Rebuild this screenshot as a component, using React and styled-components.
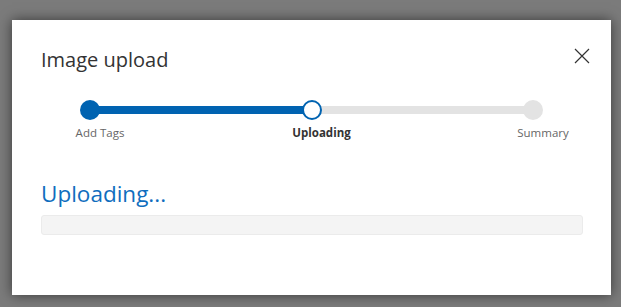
import React from "react";
import styled, { createGlobalStyle } from "styled-components";

const GlobalStyle = createGlobalStyle`
	html, body {
		margin: 0;
		padding: 0;
		background: #7b7b7b;
		font-family: "Open Sans", "Noto Sans", sans-serif;
	}
	#root {
		height: 307px;
	}
`;

const Overlay = styled.div`
	height: 307px;
	padding: 20px 0 0 12px;
	box-sizing: border-box;
`;

const Dialog = styled.div`
	width: 599px;
	height: 275px;
	background: #fff;
	box-sizing: border-box;
	padding: 24px 29px 0 29px;
	box-shadow: 0 0 12px rgba(0, 0, 0, 0.55);
	display: flex;
	flex-direction: column;
`;

const Header = styled.div`
	display: flex;
	justify-content: space-between;
	align-items: flex-start;
`;

const Title = styled.h1`
	margin: 0;
	font-size: 20px;
	font-weight: 400;
	color: #333;
	line-height: 32px;
`;

const CloseButton = styled.button`
	border: 0;
	background: none;
	padding: 0;
	margin: 4px -8px 0 0;
	width: 16px;
	height: 16px;
	cursor: pointer;
	display: flex;
`;

const Stepper = styled.div`
	position: relative;
	display: flex;
	justify-content: space-between;
	margin: 24px 19px 0 19px;
`;

const Track = styled.div`
	position: absolute;
	left: 30px;
	right: 30px;
	top: 6px;
	height: 8px;
	background: #e3e3e3;
`;

const TrackFill = styled.div`
	height: 100%;
	background: #0063b1;
`;

const Step = styled.div`
	position: relative;
	width: 60px;
	display: flex;
	flex-direction: column;
	align-items: center;
`;

const Dot = styled.div`
	width: 20px;
	height: 20px;
	border-radius: 50%;
	box-sizing: border-box;
	background: ${(p) => (p.$state === "done" ? "#0063b1" : p.$state === "active" ? "#fff" : "#e3e3e3")};
	border: ${(p) => (p.$state === "active" ? "2px solid #0063b1" : "none")};
`;

const StepLabel = styled.div`
	margin-top: 5px;
	margin-left: 20px;
	white-space: nowrap;
	font-size: 11.5px;
	line-height: 16px;
	color: ${(p) => (p.$active ? "#333" : "#666")};
	font-weight: ${(p) => (p.$active ? 700 : 400)};
`;

const Status = styled.h2`
	margin: 38px 0 0 0;
	font-size: 22.5px;
	font-weight: 400;
	color: #106ebe;
	line-height: 30px;
`;

const ProgressBar = styled.div`
	margin-top: 6px;
	width: 542px;
	height: 20px;
	box-sizing: border-box;
	background: #f4f4f4;
	border: 1px solid #ebebeb;
	border-radius: 3px;
`;

const steps = [
	{ label: "Add Tags", state: "done" },
	{ label: "Uploading", state: "active" },
	{ label: "Summary", state: "todo" },
];

function App() {
	return (
		<Overlay>
			<GlobalStyle />
			<Dialog>
				<Header>
					<Title>Image upload</Title>
					<CloseButton aria-label="Close">
						<svg width="16" height="16" viewBox="0 0 16 16">
							<path d="M1 1 L15 15 M15 1 L1 15" stroke="#333" strokeWidth="1.2" fill="none" />
						</svg>
					</CloseButton>
				</Header>
				<Stepper>
					<Track>
						<TrackFill style={{ width: "50%" }} />
					</Track>
					{steps.map((s) => (
						<Step key={s.label}>
							<Dot $state={s.state} />
							<StepLabel $active={s.state === "active"}>{s.label}</StepLabel>
						</Step>
					))}
				</Stepper>
				<Status>Uploading...</Status>
				<ProgressBar />
			</Dialog>
		</Overlay>
	);
}

export default App;
